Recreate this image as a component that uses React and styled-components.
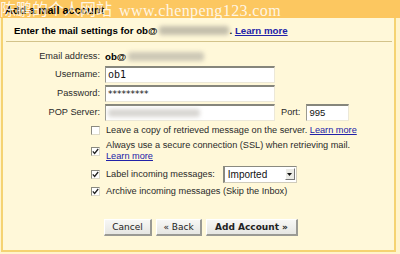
import React from "react"
import styled, { createGlobalStyle } from "styled-components"

const GlobalStyle = createGlobalStyle`
  html, body {
    margin: 0;
    padding: 0;
    background: #fff4cc;
  }
  body {
    font-family: "Liberation Sans", Arial, sans-serif;
    font-size: 9.2px;
    color: #2a2a2a;
  }
`

const Frame = styled.div`
  position: relative;
  width: 400px;
  height: 254px;
  overflow: hidden;
  display: flex;
  flex-direction: column;
`

const TitleBar = styled.div`
  height: 18px;
  flex: none;
  background: #fcc760;
  padding-left: 5px;
  font-weight: bold;
  font-size: 10.8px;
  line-height: 20px;
  color: #000;
`

const Watermark = styled.div`
  position: absolute;
  left: 0;
  top: -3px;
  white-space: nowrap;
  color: rgba(255, 255, 255, 0.85);
  font-size: 16px;
  line-height: 22px;
  pointer-events: none;
  .cn {
    font-family: "Noto Sans CJK SC", sans-serif;
  }
  .url {
    font-family: "Liberation Serif", serif;
    margin-left: 7px;
    letter-spacing: 0.4px;
    position: relative;
    top: 1px;
  }
`

const Panel = styled.div`
  flex: 1;
  margin: 0 4px 2px 1px;
  background: #fff8d9;
  border: 2px solid #f5d372;
  border-top: none;
`

const Header = styled.div`
  box-sizing: border-box;
  height: 24px;
  margin: 0 2px 0 3px;
  padding: 2px 0 0 8px;
  border-bottom: 1px solid #d3c38a;
  display: flex;
  align-items: center;
  font-weight: bold;
  font-size: 9.7px;
  color: #000;
`

const Blur = styled.span`
  display: inline-block;
  flex: none;
  width: ${p => p.$w}px;
  height: ${p => p.$h || 9}px;
  margin-left: ${p => p.$ml || 0}px;
  background: ${p => p.$c || "#c9c6bd"};
  filter: blur(2px);
  border-radius: 3px;
`

const Link = styled.a`
  color: #2222a8;
  text-decoration: underline;
  cursor: pointer;
`

const Form = styled.div`
  display: grid;
  grid-template-columns: 97px 1fr;
  column-gap: 5px;
  row-gap: 1px;
  padding-top: 6px;
  align-items: center;
`

const Label = styled.div`
  text-align: right;
  height: ${p => p.$h || 18}px;
  line-height: ${p => p.$h || 18}px;
`

const Value = styled.div`
  display: flex;
  align-items: center;
  height: ${p => p.$h || 18}px;
  b {
    font-size: 9.7px;
    color: #000;
  }
`

const Input = styled.div`
  box-sizing: border-box;
  width: ${p => p.$w}px;
  height: 17px;
  background: #fff;
  border-top: 2px solid #86867c;
  border-left: 1px solid #9a9a90;
  border-right: 1px solid #ece8d8;
  border-bottom: 1px solid #ece8d8;
  padding-left: 2px;
  display: flex;
  align-items: center;
  color: #111;
  font-family: ${p => (p.$mono ? '"DejaVu Sans Mono", monospace' : p.$dv ? '"DejaVu Sans", sans-serif' : '"Liberation Sans", sans-serif')};
  font-size: ${p => (p.$mono ? 10 : p.$dv ? 9 : 9.5)}px;
`

const Port = styled.span`
  margin: 0 6px 0 6px;
`

const Options = styled.div`
  padding-left: 88px;
  padding-top: 1px;
  display: flex;
  flex-direction: column;
`

const Option = styled.div`
  display: flex;
  align-items: center;
  gap: 6px;
  height: ${p => p.$h}px;
  line-height: 11px;
`

const Box = styled.span`
  flex: none;
  width: 9px;
  height: 9px;
  box-sizing: border-box;
  background: #fff;
  border-top: 1px solid #8a8a80;
  border-left: 1px solid #8a8a80;
  border-right: 1px solid #dedac8;
  border-bottom: 1px solid #dedac8;
  display: flex;
  align-items: center;
  justify-content: center;
`

const Select = styled.div`
  box-sizing: border-box;
  width: 74px;
  height: 17px;
  margin-left: 2px;
  background: #fff;
  border-top: 1px solid #8a8a80;
  border-left: 2px solid #8a8a80;
  border-right: 1px solid #cfcbbb;
  border-bottom: 1px solid #cfcbbb;
  display: flex;
  align-items: center;
  justify-content: space-between;
  padding-left: 3px;
  font-size: 10px;
  color: #111;
`

const Arrow = styled.span`
  box-sizing: border-box;
  width: 10px;
  height: 12px;
  margin-right: 1px;
  background: #ebebe6;
  border-top: 1px solid #fff;
  border-left: 1px solid #fff;
  border-right: 1px solid #777;
  border-bottom: 1px solid #777;
  display: flex;
  align-items: center;
  justify-content: center;
`

const Buttons = styled.div`
  display: flex;
  gap: 4px;
  padding-left: 101px;
  padding-top: 21px;
`

const Button = styled.button`
  box-sizing: border-box;
  height: 17px;
  width: ${p => p.$w}px;
  padding: 0;
  font-family: "DejaVu Sans", sans-serif;
  font-size: 9px;
  font-weight: ${p => (p.$bold ? "bold" : "normal")};
  color: #222;
  background: linear-gradient(#f7f7f5, #e6e6e2);
  border: none;
  border-right: 2px solid #9a9a94;
  border-bottom: 2px solid #9a9a94;
  border-top: 1px solid #fff;
  border-left: 1px solid #fff;
  line-height: 13px;
`

const Check = () => (
  <svg width="7" height="7" viewBox="0 0 7 7">
    <path d="M0.8 3.4 L2.6 5.4 L6.2 1" stroke="#222" strokeWidth="1.3" fill="none" />
  </svg>
)

const App = () => {
  return (
    <Frame>
      <GlobalStyle />
      <TitleBar>Add a mail account</TitleBar>
      <Watermark>
        <span className="cn">陈鹏的个人网站</span>
        <span className="url">www.chenpeng123.com</span>
      </Watermark>
      <Panel>
        <Header>
          Enter the mail settings for ob@
          <Blur $w={70} $ml={2} $c="#c4bfac" />
          .&nbsp;<Link>Learn more</Link>
        </Header>
        <Form>
          <Label $h={16}>Email address:</Label>
          <Value $h={16}>
            <b>ob@</b>
            <Blur $w={76} $ml={2} $c="#cdc8b6" />
          </Value>
          <Label>Username:</Label>
          <Value>
            <Input $w={170} $mono>ob1</Input>
          </Value>
          <Label>Password:</Label>
          <Value>
            <Input $w={170} $dv>*********</Input>
          </Value>
          <Label>POP Server:</Label>
          <Value>
            <Input $w={170}>
              <Blur $w={92} $h={8} $c="#d8d6d2" />
            </Input>
            <Port>Port:</Port>
            <Input $w={43}>995</Input>
          </Value>
        </Form>
        <Options>
          <Option $h={17}>
            <Box />
            <span>
              Leave a copy of retrieved message on the server. <Link>Learn more</Link>
            </span>
          </Option>
          <Option $h={24}>
            <Box>
              <Check />
            </Box>
            <span>
              Always use a secure connection (SSL) when retrieving mail.
              <br />
              <Link>Learn more</Link>
            </span>
          </Option>
          <Option $h={22}>
            <Box>
              <Check />
            </Box>
            <span>Label incoming messages:</span>
            <Select>
              Imported
              <Arrow>
                <svg width="5" height="3" viewBox="0 0 5 3">
                  <path d="M0 0 H5 L2.5 3 Z" fill="#111" />
                </svg>
              </Arrow>
            </Select>
          </Option>
          <Option $h={13}>
            <Box>
              <Check />
            </Box>
            <span>Archive incoming messages (Skip the Inbox)</span>
          </Option>
        </Options>
        <Buttons>
          <Button $w={48}>Cancel</Button>
          <Button $w={46}>« Back</Button>
          <Button $w={92} $bold>Add Account »</Button>
        </Buttons>
      </Panel>
    </Frame>
  )
}

export default App
